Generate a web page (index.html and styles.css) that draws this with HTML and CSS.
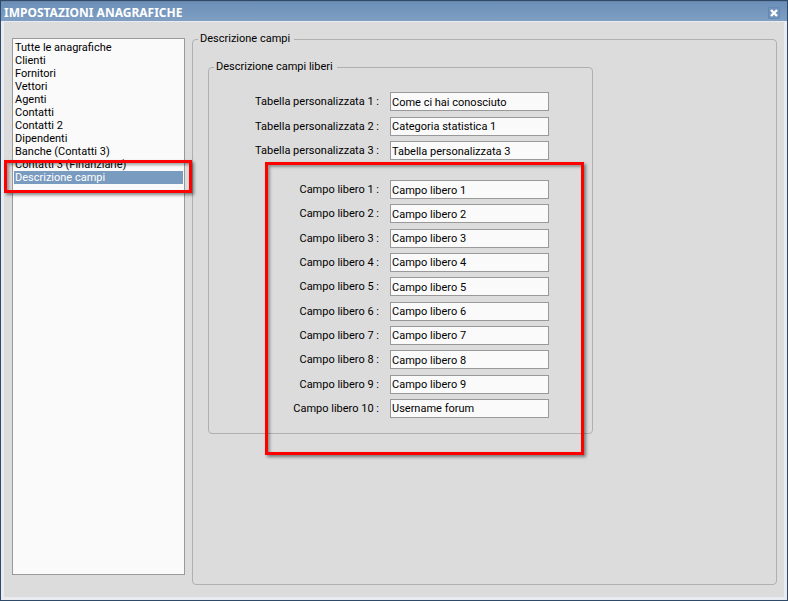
FILE: index.html
```html
<!DOCTYPE html>
<html lang="it">
<head>
<meta charset="utf-8">
<title>Impostazioni anagrafiche</title>
<link rel="stylesheet" href="styles.css">
</head>
<body>
<main class="window">
  <header class="titlebar">
    <h1 class="title">IMPOSTAZIONI ANAGRAFICHE</h1>
    <button class="close" type="button" aria-label="Chiudi">
      <svg width="8" height="8" viewBox="0 0 8 8" aria-hidden="true"><path d="M1 1L7 7M7 1L1 7" stroke="#fff" stroke-width="2.4"/></svg>
    </button>
  </header>
  <form class="content">
    <div class="sidebar">
      <select class="sections" size="11" aria-label="Sezioni">
        <option>Tutte le anagrafiche</option>
        <option>Clienti</option>
        <option>Fornitori</option>
        <option>Vettori</option>
        <option>Agenti</option>
        <option>Contatti</option>
        <option>Contatti 2</option>
        <option>Dipendenti</option>
        <option>Banche (Contatti 3)</option>
        <option>Contatti 3 (Finanziarie)</option>
        <option selected>Descrizione campi</option>
      </select>
      <div class="callout callout-section"></div>
    </div>
    <fieldset class="group">
      <legend>Descrizione campi</legend>
      <fieldset class="group group-inner">
        <legend>Descrizione campi liberi</legend>
        <div class="rows rows-tables">
          <div class="row"><label for="t1">Tabella personalizzata 1 :</label><input id="t1" type="text" value="Come ci hai conosciuto"></div>
          <div class="row"><label for="t2">Tabella personalizzata 2 :</label><input id="t2" type="text" value="Categoria statistica 1"></div>
          <div class="row"><label for="t3">Tabella personalizzata 3 :</label><input id="t3" type="text" value="Tabella personalizzata 3"></div>
        </div>
        <div class="rows rows-fields">
          <div class="row"><label for="c1">Campo libero 1 :</label><input id="c1" type="text" value="Campo libero 1"></div>
          <div class="row"><label for="c2">Campo libero 2 :</label><input id="c2" type="text" value="Campo libero 2"></div>
          <div class="row"><label for="c3">Campo libero 3 :</label><input id="c3" type="text" value="Campo libero 3"></div>
          <div class="row"><label for="c4">Campo libero 4 :</label><input id="c4" type="text" value="Campo libero 4"></div>
          <div class="row"><label for="c5">Campo libero 5 :</label><input id="c5" type="text" value="Campo libero 5"></div>
          <div class="row"><label for="c6">Campo libero 6 :</label><input id="c6" type="text" value="Campo libero 6"></div>
          <div class="row"><label for="c7">Campo libero 7 :</label><input id="c7" type="text" value="Campo libero 7"></div>
          <div class="row"><label for="c8">Campo libero 8 :</label><input id="c8" type="text" value="Campo libero 8"></div>
          <div class="row"><label for="c9">Campo libero 9 :</label><input id="c9" type="text" value="Campo libero 9"></div>
          <div class="row"><label for="c10">Campo libero 10 :</label><input id="c10" type="text" value="Username forum"></div>
          <div class="callout callout-fields"></div>
        </div>
      </fieldset>
    </fieldset>
  </form>
</main>
</body>
</html>
```
FILE: styles.css
```css
* { box-sizing: border-box; }

body {
  margin: 0;
  font-family: Roboto, sans-serif;
  font-size: 11px;
  line-height: 14px;
  color: #000;
}

.window {
  display: flex;
  flex-direction: column;
  min-height: 100vh;
  border: 1px solid #2f4a69;
  background: #dcdcdc;
}

.titlebar {
  display: flex;
  align-items: center;
  justify-content: space-between;
  height: 20px;
  padding: 2px 7px 0 3px;
  border-top: 1px solid #6783a8;
  background: linear-gradient(#6b8fb8, #7f9fc3);
}

.title {
  margin: 0;
  font-family: "Noto Sans", sans-serif;
  font-size: 12px;
  line-height: 16px;
  font-weight: 700;
  color: #fff;
}

.close {
  display: grid;
  place-items: center;
  width: 12px;
  height: 12px;
  padding: 0;
  border: 1px solid #6488b4;
  border-radius: 1px;
  background: #7193bb;
}

.content {
  flex: 1;
  display: flex;
  gap: 7px;
  padding: 10px 7px 12px 8px;
  border: solid #e9ebf0;
  border-width: 1px 3px 3px;
}

.sidebar {
  position: relative;
  display: flex;
  flex: 0 0 173px;
  padding: 6px 0 10px;
}

.sections {
  flex: 1;
  padding: 2px 1px;
  border: 1px solid #999;
  border-radius: 0;
  outline: 0;
  background: #fafafa;
  font: inherit;
  color: #000;
  overflow: hidden;
}

.sections option {
  min-height: 13px;
  height: 13px;
  padding: 0 1px;
  line-height: 13px;
}

.sections option:checked {
  background: #7a9bc0 linear-gradient(#7a9bc0, #7a9bc0);
  color: #fff;
}

.group {
  flex: 1;
  min-width: 0;
  margin: 0;
  padding: 14px 15px;
  border: 1px solid #b0b0b0;
  border-radius: 4px;
}

.group legend {
  margin-left: -10px;
  padding: 0 4px 0 2px;
}

.group-inner {
  max-width: 385px;
  padding: 18px 43px 15px 15px;
}

.rows {
  position: relative;
  display: flex;
  flex-direction: column;
  justify-content: space-between;
}

.rows-tables { min-height: 68px; }

.rows-fields {
  min-height: 238px;
  margin-top: 20px;
}

.row {
  display: flex;
  justify-content: flex-end;
  align-items: center;
  gap: 11px;
}

.row label { padding-top: 1px; }

.row input {
  width: 159px;
  height: 19px;
  padding: 1px 1px 0;
  border: 1px solid #999;
  border-radius: 0;
  outline: 0;
  background: #fafafa;
  font: inherit;
  color: #000;
}

.callout {
  position: absolute;
  border: 3px solid #f00;
  box-shadow: 2px 2px 3px rgba(0, 0, 0, .45), inset 2px 2px 3px rgba(0, 0, 0, .35);
  pointer-events: none;
}

.callout-section {
  top: 128px;
  left: -8px;
  right: -7px;
  height: 33px;
}

.callout-fields {
  top: -18px;
  right: -35px;
  bottom: -37px;
  width: 319px;
}
```
